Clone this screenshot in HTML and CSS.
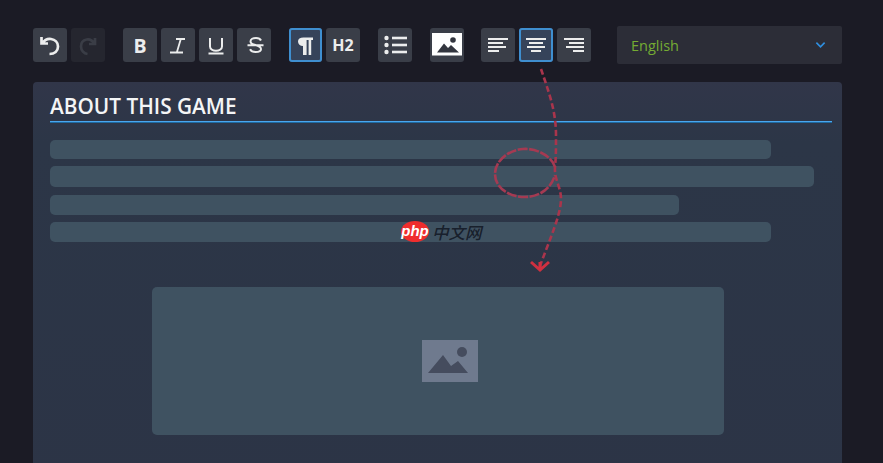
FILE: index.html
```html
<!DOCTYPE html>
<html lang="en">
<head>
<meta charset="utf-8">
<title>About this game editor</title>
<link rel="stylesheet" href="styles.css">
</head>
<body>
<div class="page">
  <div class="toolbar">
    <div class="group">
      <button class="btn"><svg viewBox="0 0 34 34" class="ico"><path d="M8.500 9v6.500H15M9 15.500C11.500 12 15 10.500 18 11c4 .6 7 3.500 7 7.500 0 4.500-3.500 7.500-8.500 7.500" fill="none" stroke="#eceded" stroke-width="2.700"/></svg></button>
      <button class="btn off"><svg viewBox="0 0 34 34" class="ico"><path d="M24 10v6h-6M23.500 15.500C21.500 12.500 18 11 15.500 11.500c-3.500.6-5.500 3.500-5.500 7 0 4 3 7 6.500 7.500" fill="none" stroke="#3a3d46" stroke-width="2.700"/></svg></button>
    </div>
    <div class="group">
      <button class="btn txt bold">B</button>
      <button class="btn"><svg viewBox="0 0 34 34" class="ico"><path d="M15 11h9M19.800 11l-4 13.500M9 24.500h13" fill="none" stroke="#eceded" stroke-width="1.800"/></svg></button>
      <button class="btn"><svg viewBox="0 0 34 34" class="ico"><path d="M11 10v8.500c0 5.500 12 5.500 12 0V10M9.500 25.500h15" fill="none" stroke="#eceded" stroke-width="2"/></svg></button>
      <button class="btn"><svg viewBox="0 0 34 34" class="ico"><path d="M24 12.500c-.8-1.800-3-2.500-5-2.500-3 0-5.500 1.400-5.500 3.400 0 1.800 2 2.800 5 3.600 3 .8 5.500 1.800 5.500 4 0 1.800-2.500 3-5.500 3-2.500 0-4.500-1-5.500-2.800M10.500 17.200h16" fill="none" stroke="#eceded" stroke-width="2"/></svg></button>
    </div>
    <div class="group">
      <button class="btn on narrow"><svg viewBox="0 0 33 34" class="ico-n"><path d="M14 27v-9c-3 0-5-2-5-4.500S11 9.500 14.500 9.500H24v2.500h-1.800v15h-2.600V12h-2v15z" fill="#eceded"/></svg></button>
      <button class="btn txt h2">H2</button>
    </div>
    <div class="group">
      <button class="btn"><svg viewBox="0 0 34 34" class="ico"><g fill="#eceded"><circle cx="8.500" cy="10" r="2.200"/><circle cx="8.500" cy="17" r="2.200"/><circle cx="8.500" cy="24" r="2.200"/><rect x="14" y="8.700" width="15" height="2.600"/><rect x="14" y="15.700" width="15" height="2.600"/><rect x="14" y="22.700" width="15" height="2.600"/></g></svg></button>
    </div>
    <div class="group img-group">
      <button class="btn"><svg viewBox="0 0 34 34" class="ico"><rect x="2" y="5" width="30" height="22.500" fill="#fff"/><path d="M7 24.500l7-9 4 4.500 3-3 8 7.500z" fill="#33363f"/><circle cx="23" cy="12" r="2.800" fill="#33363f"/></svg></button>
    </div>
    <div class="group">
      <button class="btn"><svg viewBox="0 0 34 34" class="ico"><g fill="#eceded"><rect x="7" y="10" width="20" height="2"/><rect x="7" y="14" width="15" height="2"/><rect x="7" y="18" width="18" height="2"/><rect x="7" y="22" width="11" height="2"/></g></svg></button>
      <button class="btn on"><svg viewBox="0 0 34 34" class="ico"><g fill="#eceded"><rect x="7" y="10" width="20" height="2"/><rect x="10" y="14" width="14" height="2"/><rect x="8" y="18" width="18" height="2"/><rect x="12" y="22" width="10" height="2"/></g></svg></button>
      <button class="btn"><svg viewBox="0 0 34 34" class="ico"><g fill="#eceded"><rect x="7" y="10" width="20" height="2"/><rect x="12" y="14" width="15" height="2"/><rect x="9" y="18" width="18" height="2"/><rect x="16" y="22" width="11" height="2"/></g></svg></button>
    </div>
    <div class="select">
      <span class="lang">English</span>
      <svg viewBox="0 0 12 8" class="chev"><path d="M1.500 1.500L6 6l4.500-4.500" fill="none" stroke="#2f8fe0" stroke-width="1.800"/></svg>
    </div>
  </div>
  <div class="panel">
    <h2 class="title">ABOUT THIS GAME</h2>
    <div class="lines">
      <div class="line l1"></div>
      <div class="line l2"></div>
      <div class="line l3"></div>
      <div class="line l4"></div>
    </div>
    <div class="placeholder">
      <svg viewBox="0 0 56 42" class="ph-ico"><rect width="56" height="42" fill="#6f7a8e"/><path d="M6 33l15-18 8 11 7-5 10 12z" fill="#454c5e"/><circle cx="40" cy="12" r="5" fill="#454c5e"/></svg>
    </div>
  </div>
  <svg class="mark" viewBox="0 0 883 463">
    <g fill="none" stroke="#a9354c" stroke-width="2.600" stroke-linecap="butt">
      <path d="M541 69C548 90 556 110 556 135c0 15 0 22-1 32-1 12 6 20 6 32 0 16-12 42-21 67" stroke-dasharray="6 3"/>
      <path d="M555 167c-3-10-17-19-32-18-15 1-28 12-28 25 0 13 13 23 30 23 14 0 26-8 30-22" stroke-dasharray="10 1.500" stroke="#a53a52"/>
      <path d="M531 262l9 8 9-8M540 262v8" stroke="#cf3040" stroke-width="3"/>
    </g>
  </svg>
  <div class="watermark"><span class="php">php</span><span class="cn">中文网</span></div>
</div>
</body>
</html>
```
FILE: styles.css
```css
* { box-sizing: border-box; }
html, body { margin: 0; height: 100%; overflow: hidden; }
body { background: #1b1b25; font-family: "Open Sans", "Liberation Sans", sans-serif; }
.page { position: relative; width: 883px; height: 463px; padding: 26px 41px 0 33px; overflow: hidden; }
.toolbar { display: flex; align-items: center; height: 38px; gap: 18px; }
.group { display: flex; gap: 4px; }
.img-group { margin-right: -1px; }
.btn { width: 34px; height: 34px; padding: 0; border: 0; border-radius: 3px; background: #3a3e48; color: #eceded; display: flex; align-items: center; justify-content: center; }
.btn.narrow { width: 33px; }
.btn.off { background: #25262f; }
.btn.on { background: #36435a; box-shadow: inset 0 0 0 2px #3f8fd0; }
.ico { width: 34px; height: 34px; display: block; }
.ico-n { width: 33px; height: 34px; display: block; }
.txt { font-family: "Open Sans", "Liberation Sans", sans-serif; font-weight: 700; }
.bold { font-size: 19.500px; }
.h2 { font-size: 16px; }
.select { flex: 1; height: 38px; margin-left: 8px; padding: 0 16px 0 14px; background: #2c2d37; border-radius: 2px; display: flex; align-items: center; justify-content: space-between; }
.lang { font-size: 14.500px; color: #75ab33; }
.chev { width: 11px; height: 8px; display: block; }
.panel { margin-top: 18px; height: 420px; padding: 12px 10px 0 17px; border-radius: 4px 4px 0 0; background: linear-gradient(180deg, #313649 0, #2c3647 60px, #2c3446 100%); }
.title { margin: 0; height: 28px; border-bottom: 1px solid #4aa6ee; box-shadow: 0 1px 0 #1f6aa0; font-family: "Open Sans", "Noto Sans", sans-serif; font-size: 20.800px; line-height: 25px; font-weight: 600; color: #f4f5f6; }
.lines { display: flex; flex-direction: column; gap: 7px; margin-top: 18px; }
.line { height: 20px; border-radius: 5px; background: #3f5261; }
.l1 { width: 721px; height: 19px; }
.l2 { width: 764px; height: 21px; }
.l3 { width: 629px; margin-top: 1px; }
.l4 { width: 721px; }
.placeholder { width: 572px; height: 148px; margin: 45px 0 0 102px; border-radius: 5px; background: #3f5261; display: flex; align-items: center; justify-content: center; }
.ph-ico { width: 56px; height: 42px; display: block; margin-left: 24px; }
.mark { position: absolute; left: 0; top: 0; width: 883px; height: 463px; pointer-events: none; }
.watermark { position: absolute; left: 401px; top: 221px; display: flex; align-items: center; gap: 3px; }
.php { width: 28px; height: 21px; border-radius: 50%; background: #ef2d2d; color: #fff; font-family: "Liberation Sans", sans-serif; font-style: italic; font-weight: 700; font-size: 15px; line-height: 19px; text-align: center; }
.cn { font-family: "Noto Sans CJK SC", sans-serif; font-size: 16.500px; line-height: 20px; font-weight: 500; font-style: italic; color: #18202c; }
```
